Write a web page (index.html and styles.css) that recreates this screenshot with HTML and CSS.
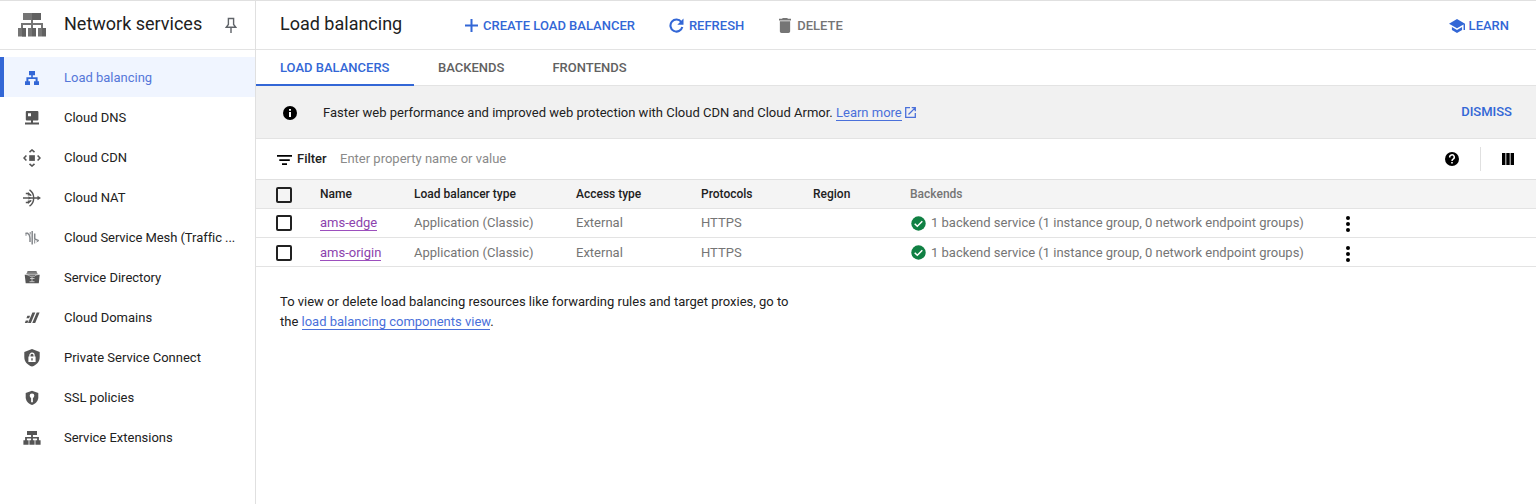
FILE: index.html
```html
<!DOCTYPE html>
<html lang="en">
<head>
<meta charset="utf-8">
<title>Load balancing</title>
<link rel="stylesheet" href="styles.css">
</head>
<body>
<div class="app">
  <aside class="sidebar">
    <div class="product">
      <svg class="product-icon" width="28" height="26" viewBox="0 0 28 26"><path fill="#757575" d="M5 1h9v7H5zM0 16h8v8.500H0zM10 16h4v8.500h-4zM20 16h4v8.500h-4z"/><path fill="#616161" d="M14 1h9v7h-9zM4 16h4v8.500H4zM14 16h4v8.500h-4zM24 16h4v8.500h-4z"/><path fill="none" stroke="#757575" stroke-width="2" d="M14 8v8M4 16v-4h20v4"/></svg>
      <h2 class="product-name">Network services</h2>
      <svg class="pin" width="12" height="17" viewBox="0 0 12 17"><path fill="none" stroke="#5f6368" stroke-width="1.4" d="M2.700 1.500h6.600M3.400 1.500v6L1.200 10.300h9.600L8.600 7.500v-6M6 10.300V16"/></svg>
    </div>
    <nav class="nav">
      <a class="nav-item active"><svg class="nav-icon" viewBox="0 0 18 18"><path fill="currentColor" d="M6 2h6v4.200H9.800v2h4.800v4H16V16h-5v-3.800h1.600V10H5.400v2.200H7V16H2v-3.800h1.400v-4h4.800v-2H6z"/></svg><span class="nav-label">Load balancing</span></a>
      <a class="nav-item"><svg class="nav-icon" viewBox="0 0 18 18"><path fill="currentColor" fill-rule="evenodd" d="M3.800 2h10.600Q15.400 2 15.400 3v7.400q0 1-1 1H10v2h6V15.500H2v-2.100h6v-2H3.800q-1 0-1-1V3q0-1 1-1zM5 4.200v3h3v-3z"/></svg><span class="nav-label">Cloud DNS</span></a>
      <a class="nav-item"><svg class="nav-icon" viewBox="0 0 18 18"><path fill="currentColor" d="M6.200 6.200h5.700v5.700H6.200z"/><path fill="none" stroke="currentColor" stroke-width="1.600" d="M6.500 3.200L9 1l2.500 2.200M6.500 14.800L9 17l2.500-2.200M3.400 6.500L1 9l2.400 2.500M14.600 6.500L17 9l-2.400 2.500"/></svg><span class="nav-label">Cloud CDN</span></a>
      <a class="nav-item"><svg class="nav-icon" viewBox="0 0 18 18"><path fill="none" stroke="currentColor" stroke-width="1.400" d="M6.500.8Q10.700 3.500 10.700 9T6.500 17.200M0 9h16M2.800 4.500h2.400l3 2M2.800 13.500h2.400l3-2"/><path fill="currentColor" d="M14.500 6.800L18 9l-3.500 2.200zM5.500 7.200L8 9l-2.500 1.800zM5 3l3.700 3.500-4 .1zM5 15l3.700-3.500-4-.1z"/></svg><span class="nav-label">Cloud NAT</span></a>
      <a class="nav-item"><svg class="nav-icon mesh" viewBox="0 0 18 18"><path fill="none" stroke="currentColor" stroke-width="1.500" d="M2.500 4.200h2Q7 6 7 9v4M9.200 2v13.500M11.700 4.500v5.500l4 1.600"/><path fill="none" stroke="currentColor" stroke-width="1" d="M3 6.800V4.200M7.200 3v2.500M11.700 11v3.500M13.500 13l2.300-1.400"/></svg><span class="nav-label">Cloud Service Mesh (Traffic ...</span></a>
      <a class="nav-item"><svg class="nav-icon" viewBox="0 0 18 18"><path fill="#8a8a8a" d="M4.500 2.500h9L15 5.500H3z"/><path fill="currentColor" d="M1.700 5.800h15L15.800 14.300H2.700zM4.500 2.300h9v1h-9z"/><path fill="none" stroke="#ddd" stroke-width=".8" d="M3 5.500l2.500.5 1.200 1.200h5L12.900 6l2.300-.5M7 9.500h4.500M9 8v4.500M6.500 12.700h5"/></svg><span class="nav-label">Service Directory</span></a>
      <a class="nav-item"><svg class="nav-icon" viewBox="0 0 18 18"><path fill="currentColor" d="M13.700 3.600h2.900L12.200 14H9.300zM9.400 3.600h2.900L7.900 14H5zM4.400 6.800h2.700L6.100 9.200H3.400zM2.800 11.600h2.700L4.500 14H1.800z"/></svg><span class="nav-label">Cloud Domains</span></a>
      <a class="nav-item"><svg class="nav-icon" viewBox="0 0 18 18"><path fill="currentColor" d="M9 0l7.700 3v5c0 4.600-3 8-7.700 9.600C4.300 16 1.300 12.600 1.300 8V3z"/><path fill="#fff" d="M5.400 7.500h7.200V13H5.400z"/><path fill="none" stroke="#fff" stroke-width="1.200" d="M6.900 8V6.300a2.100 2.100 0 0 1 4.200 0V8"/><path fill="currentColor" d="M8.300 9.200h1.400v2.300H8.300z"/></svg><span class="nav-label">Private Service Connect</span></a>
      <a class="nav-item"><svg class="nav-icon" viewBox="0 0 18 18"><path fill="currentColor" d="M9 1.700l6.300 2.400v4.200c0 3.700-2.600 6.400-6.300 7.700-3.700-1.300-6.300-4-6.300-7.700V4.100z"/><circle cx="9" cy="6.800" r="2.300" fill="#fff"/><path fill="#fff" d="M8.100 8h1.800v5.200H8.100z"/></svg><span class="nav-label">SSL policies</span></a>
      <a class="nav-item"><svg class="nav-icon" viewBox="0 0 18 18"><path fill="currentColor" d="M4 2h10v4H9.900v1.900h6v3.300h1.700v4.500h-5.200v-4.500h1.700V9.500H9.900v1.700h1.700v4.500H6.400v-4.500h1.700V9.500H3.900v1.700h1.700v4.500H.4v-4.500h1.700V7.900h6V6H4z"/></svg><span class="nav-label">Service Extensions</span></a>
    </nav>
  </aside>
  <main class="main">
    <header class="toolbar">
      <h1 class="title">Load balancing</h1>
      <button class="action create"><svg width="13" height="13" viewBox="0 0 13 13"><path fill="none" stroke="currentColor" stroke-width="2" d="M6.500 0v13M0 6.500h13"/></svg><span>CREATE LOAD BALANCER</span></button>
      <button class="action refresh"><svg width="15" height="15" viewBox="0 0 15 15"><path fill="none" stroke="currentColor" stroke-width="2.100" d="M12.300 4A6 6 0 1 0 13.300 9"/><path fill="currentColor" d="M14.500 .5v6.200H8.300z"/></svg><span>REFRESH</span></button>
      <button class="action delete"><svg width="12" height="15" viewBox="0 0 14 18" preserveAspectRatio="none"><path fill="currentColor" d="M1 16c0 1.100.9 2 2 2h8c1.100 0 2-.9 2-2V4H1zM14 1h-3.500l-1-1h-5l-1 1H0v2h14z"/></svg><span>DELETE</span></button>
      <button class="action learn"><svg width="16" height="14" viewBox="0 0 22 18" preserveAspectRatio="none"><path fill="currentColor" d="M4 10.180v4L11 18l7-3.820v-4L11 14zM11 0L0 6l11 6 9-4.910V14h2V6z"/></svg><span>LEARN</span></button>
    </header>
    <div class="tabs">
      <a class="tab selected"><span>LOAD BALANCERS</span></a>
      <a class="tab backends"><span>BACKENDS</span></a>
      <a class="tab frontends"><span>FRONTENDS</span></a>
    </div>
    <section class="banner">
      <svg class="info" width="14" height="14" viewBox="0 0 14 14"><circle cx="7" cy="7" r="7"/><path fill="#fff" d="M6 3h2v1.800H6zM6 6h2v5H6z"/></svg>
      <p class="banner-text">Faster web performance and improved web protection with Cloud CDN and Cloud Armor. <a class="link">Learn more</a></p>
      <svg class="external" width="11" height="11" viewBox="0 0 11 11"><path fill="none" stroke="currentColor" stroke-width="1.300" d="M5 .7H.7v9.600h9.600V6M6.700.7h3.600v3.600M10.100.9L3.500 7.500"/></svg>
      <button class="dismiss">DISMISS</button>
    </section>
    <div class="filter">
      <svg class="filter-icon" width="15" height="10" viewBox="0 0 15 10"><path d="M0 0h15v1.700H0zM2.300 4.200h10.500v1.700H2.300zM5 8.300h5V10H5z"/></svg>
      <span class="filter-label">Filter</span>
      <span class="placeholder">Enter property name or value</span>
      <svg class="help" width="14" height="14" viewBox="0 0 14 14"><circle cx="7" cy="7" r="7"/><path fill="none" stroke="#fff" stroke-width="1.500" d="M4.700 5.500a2.300 2.300 0 1 1 3.400 1.700Q7 7.900 7 9"/><path fill="#fff" d="M6.200 9.900h1.600v1.500H6.200z"/></svg>
      <svg class="columns" width="12" height="12" viewBox="0 0 12 12"><path d="M0 0h3.400v12H0zM4.300 0h3.400v12H4.300zM8.600 0H12v12H8.600z"/></svg>
    </div>
    <table class="table">
      <colgroup><col class="c-check"><col class="c-name"><col class="c-type"><col class="c-access"><col class="c-proto"><col class="c-region"><col class="c-back"><col></colgroup>
      <thead><tr><th><span class="checkbox low"></span></th><th>Name</th><th>Load balancer type</th><th>Access type</th><th>Protocols</th><th>Region</th><th class="muted">Backends</th><th></th></tr></thead>
      <tbody>
        <tr><td><span class="checkbox"></span></td><td><a class="visited">ams-edge</a></td><td>Application (Classic)</td><td>External</td><td>HTTPS</td><td></td><td><div class="status"><svg width="15" height="15" viewBox="0 0 15 15"><circle cx="7.500" cy="7.500" r="7.200" fill="#108043"/><path fill="none" stroke="#fff" stroke-width="1.500" d="M3.700 7.700l2.600 2.600 5-5"/></svg><span>1 backend service (1 instance group, 0 network endpoint groups)</span></div></td><td><svg class="more" width="4" height="16" viewBox="0 0 4 16"><circle cx="2" cy="2" r="2"/><circle cx="2" cy="8" r="2"/><circle cx="2" cy="14" r="2"/></svg></td></tr>
        <tr class="last"><td><span class="checkbox"></span></td><td><a class="visited">ams-origin</a></td><td>Application (Classic)</td><td>External</td><td>HTTPS</td><td></td><td><div class="status"><svg width="15" height="15" viewBox="0 0 15 15"><circle cx="7.500" cy="7.500" r="7.200" fill="#108043"/><path fill="none" stroke="#fff" stroke-width="1.500" d="M3.700 7.700l2.600 2.600 5-5"/></svg><span>1 backend service (1 instance group, 0 network endpoint groups)</span></div></td><td><svg class="more" width="4" height="16" viewBox="0 0 4 16"><circle cx="2" cy="2" r="2"/><circle cx="2" cy="8" r="2"/><circle cx="2" cy="14" r="2"/></svg></td></tr>
      </tbody>
    </table>
    <p class="note">To view or delete load balancing resources like forwarding rules and target proxies, go to<br>the <a class="link">load balancing components view</a>.</p>
  </main>
</div>
</body>
</html>
```
FILE: styles.css
```css
* { box-sizing: border-box; }
body { margin: 0; background: #fff; color: #212121; font: 13px/20px Roboto, sans-serif; letter-spacing: 0; }
h1, h2, p { margin: 0; font-weight: 400; }
button { border: 0; padding: 0; background: none; font: inherit; letter-spacing: inherit; }
svg { display: block; flex: none; }
.app { display: flex; height: 504px; border-top: 1px solid #e0e0e0; overflow: hidden; white-space: nowrap; }

.sidebar { width: 256px; flex: none; border-right: 1px solid #e0e0e0; }
.product { display: flex; align-items: center; height: 49px; padding-left: 18px; border-bottom: 1px solid #e3e3e3; }
.product-name { width: 161px; margin-left: 18px; font-size: 18px; line-height: 24px; padding-bottom: 2px; }
.pin { margin-top: 1px; }
.nav { padding-top: 7px; }
.nav-item { display: flex; align-items: center; height: 40px; padding-left: 23px; color: #212121; }
.nav-icon { width: 18px; height: 18px; margin-right: 23px; color: #555; margin-top: 1px; }
.nav-label { padding-top: 1px; letter-spacing: -.01px; }
.mesh { color: #85888c; }
.mesh + .nav-label { letter-spacing: -.06px; }
.nav-item.active { padding-left: 19px; border-left: 4px solid #3367d6; background: #f0f5ff; color: #5577d9; }
.active .nav-icon { color: #3367d6; }

.main { flex: 1; min-width: 0; }
.toolbar { display: flex; align-items: center; height: 49px; padding: 0 27px 0 24px; border-bottom: 1px solid #e3e3e3; }
.title { width: 185px; font-size: 18px; line-height: 24px; padding-bottom: 2px; }
.action { display: flex; align-items: center; gap: 6px; padding-top: 1px; color: #3367d6; font-weight: 500; }
.create { gap: 5px; }
.refresh { margin-left: 34px; gap: 5px; }
.delete { margin-left: 35px; color: #757575; }
.learn { margin-left: auto; gap: 4px; }
.tabs { display: flex; height: 36px; border-bottom: 1px solid #e3e3e3; font-weight: 500; color: #616161; }
.tab { display: flex; align-items: center; height: 36px; padding: 0 24px; }
.selected { width: 158px; color: #3367d6; border-bottom: 2px solid #3367d6; padding-top: 2px; }
.banner { display: flex; align-items: center; height: 53px; padding: 0 24px 0 27px; background: #f1f1f1; border-bottom: 1px solid #e3e3e3; }
.info { margin-right: 26px; margin-top: 2px; }
.banner-text { padding-top: 2px; }
.link { color: #4a70da; border-bottom: 1px solid #4a70da; }
.external { margin-left: 3px; color: #4a70da; }
.dismiss { margin-left: auto; color: #3367d6; font-weight: 500; }
.filter { display: flex; align-items: center; height: 41px; padding: 0 21px; border-bottom: 1px solid #e0e0e0; }
.filter-icon { margin-right: 5px; margin-top: 1px; }
.filter-label { font-weight: 500; width: 43px; }
.placeholder { color: #8a8a8a; }
.help { margin-left: auto; margin-right: 21px; }
.columns { width: 35px; height: 24px; padding: 6px 1px 6px 21px; border-left: 1px solid #e0e0e0; }

.table { width: 100%; table-layout: fixed; border-collapse: separate; border-spacing: 0; color: #757575; }
.c-check { width: 64px; } .c-name { width: 94px; } .c-type { width: 162px; } .c-access { width: 125px; }
.c-proto { width: 112px; } .c-region { width: 97px; } .c-back { width: 435px; }
th, td { padding: 0; height: 29px; text-align: left; vertical-align: middle; border-bottom: 1px solid #e3e3e3; }
.last td { padding-top: 1px; }
th { background: #f4f4f4; color: #212121; font-size: 12px; font-weight: 500; }
th.muted { color: #757575; }
.checkbox { display: block; width: 16px; height: 16px; margin-left: 20px; border: 2px solid #212121; border-radius: 2px; }
.low { position: relative; top: 1px; }
.visited { color: #8c43ad; border-bottom: 1px solid #9c4fbd; }
.status { display: flex; align-items: center; gap: 5px; padding-left: 1px; }
.more { margin-left: 1px; margin-top: 2px; }
.note { padding: 25px 24px 24px; color: #212121; }
```
